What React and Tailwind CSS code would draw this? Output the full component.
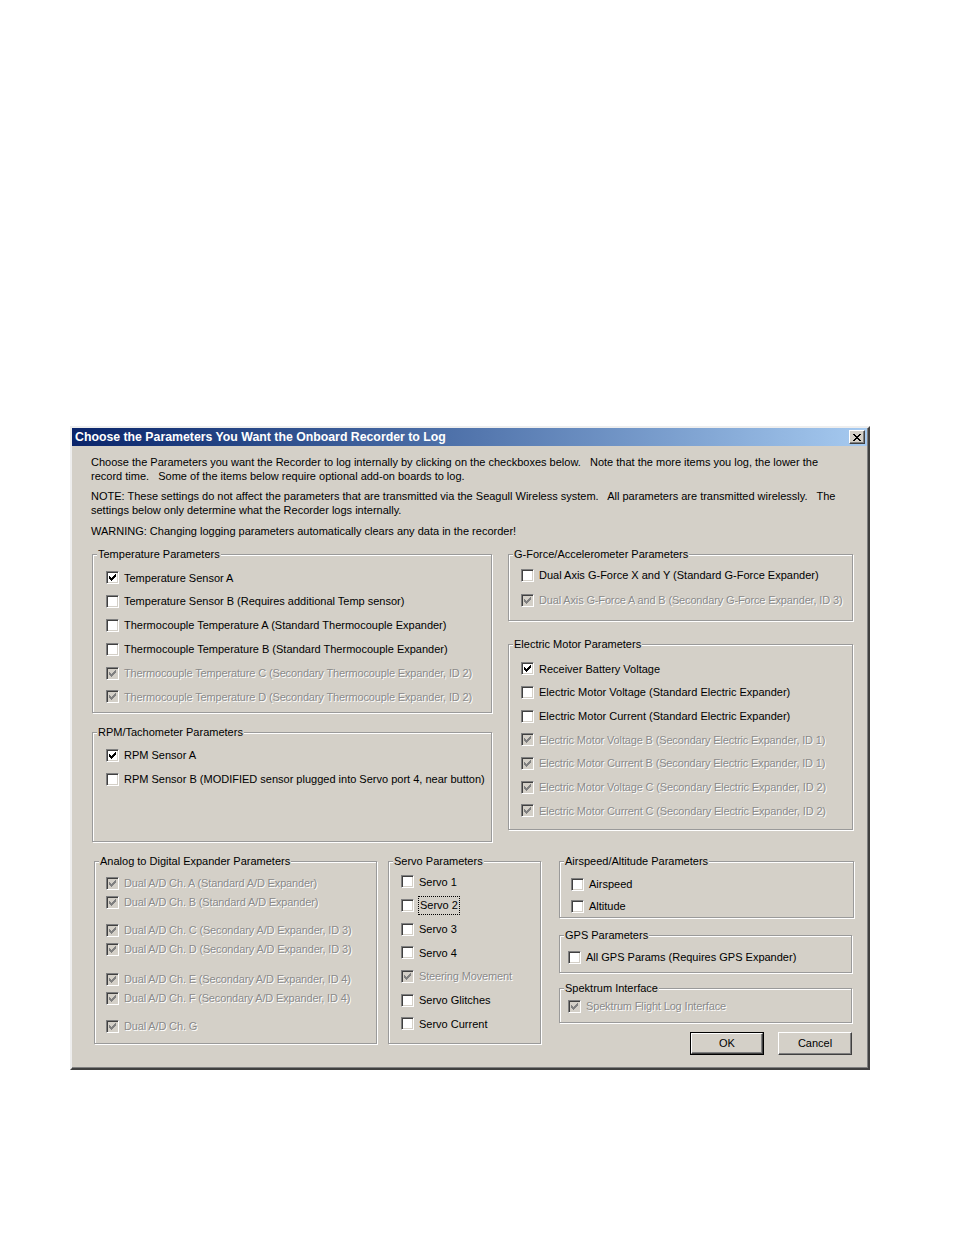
import React from "react";

function Check({ color }) {
  const rows = [
    [[6, 1]],
    [[5, 2]],
    [[0, 1], [4, 3]],
    [[0, 2], [3, 3]],
    [[0, 5]],
    [[1, 3]],
    [[2, 1]],
  ];
  return (
    <svg width="7" height="7" viewBox="0 0 7 7" shapeRendering="crispEdges" className="absolute left-[2px] top-[2px]">
      {rows.map((segs, y) =>
        segs.map(([x, w], i) => <rect key={y + "-" + i} x={x} y={y} width={w} height="1" fill={color} />)
      )}
    </svg>
  );
}

function Box({ checked, disabled }) {
  return (
    <span
      className={`relative inline-block w-[13px] h-[13px] shrink-0 border border-t-[#808080] border-l-[#808080] border-r-white border-b-white shadow-[inset_1px_1px_0_#404040,inset_-1px_-1px_0_#d4d0c8] ${
        disabled ? "bg-[#d4d0c8]" : "bg-white"
      }`}
    >
      {checked && <Check color={disabled ? "#808080" : "#000"} />}
    </span>
  );
}

function Item({ label, checked, disabled, h, className = "", focus }) {
  return (
    <div className={`flex items-center ${className}`} style={{ height: h }}>
      <Box checked={checked} disabled={disabled} />
      <span
        className={`ml-[5px] whitespace-nowrap ${
          disabled ? "text-[#8a8a8a] tracking-[-0.15px] [text-shadow:1px_1px_0_#fff]" : "text-black"
        } ${focus ? "outline outline-1 outline-dotted outline-black px-[1px] -ml-[-4px]" : ""}`}
      >
        {label}
      </span>
    </div>
  );
}

function Group({ title, className = "", bodyClass = "", children }) {
  return (
    <fieldset
      className={`border border-[#9a9a9a] shadow-[inset_1px_1px_0_#fff,1px_1px_0_#fff] ${className}`}
    >
      <legend className="ml-[4px] px-[1px] leading-[13px] bg-[#d4d0c8] text-black">{title}</legend>
      <div className={bodyClass}>{children}</div>
    </fieldset>
  );
}

function Btn({ label, def }) {
  return (
    <button
      className={`w-[74px] h-[23px] bg-[#d4d0c8] text-black ${
        def ? "border border-black" : ""
      }`}
    >
      <span className="flex items-center justify-center w-full h-full border border-t-white border-l-white border-r-[#404040] border-b-[#404040] shadow-[inset_-1px_-1px_0_#808080]">
        {label}
      </span>
    </button>
  );
}

export default function App() {
  return (
    <div
      className="min-h-[1235px] bg-white pt-[426px] pl-[70px] text-[11px] text-black"
      style={{ fontFamily: '"Liberation Sans", Arial, sans-serif' }}
    >
      <div className="w-[800px] h-[644px] bg-[#d4d0c8] border-2 border-t-[#eeeeee] border-l-[#eeeeee] border-r-[#404040] border-b-[#404040] shadow-[inset_-1px_-1px_0_#808080] flex flex-col">
        {/* Title bar */}
        <div className="h-[18px] mr-[1px] flex items-center justify-between bg-gradient-to-r from-[#0a246a] to-[#a6caf0] pl-[3px] pr-[2px]">
          <span className="text-white font-bold text-[12.3px] leading-none whitespace-nowrap">
            Choose the Parameters You Want the Onboard Recorder to Log
          </span>
          <span className="w-[16px] h-[14px] bg-[#d4d0c8] border border-t-white border-l-white border-r-[#404040] border-b-[#404040] shadow-[inset_-1px_-1px_0_#808080] flex items-center justify-center">
            <svg width="8" height="7" viewBox="0 0 8 7" shapeRendering="crispEdges">
              <path d="M0 0h2v1h1v1h2v-1h1v-1h2v1h-1v1h-1v1h-1v1h1v1h1v1h1v1h-2v-1h-1v-1h-2v1h-1v1h-2v-1h1v-1h1v-1h1v-1h-1v-1h-1v-1h-1z" fill="#000" />
            </svg>
          </span>
        </div>

        {/* Body */}
        <div className="pt-[9px] pl-[19px] leading-[14px]">
          <p className="whitespace-pre">
            {"Choose the Parameters you want the Recorder to log internally by clicking on the checkboxes below.   Note that the more items you log, the lower the\nrecord time.   Some of the items below require optional add-on boards to log."}
          </p>
          <p className="whitespace-pre mt-[6px]">
            {"NOTE: These settings do not affect the parameters that are transmitted via the Seagull Wireless system.   All parameters are transmitted wirelessly.   The\nsettings below only determine what the Recorder logs internally."}
          </p>
          <p className="whitespace-pre mt-[7px]">
            {"WARNING: Changing logging parameters automatically clears any data in the recorder!"}
          </p>
        </div>

        {/* Top groups */}
        <div className="flex pl-[20px] mt-[10px] gap-[16px]">
          <div className="flex flex-col w-[400px]">
            <Group title="Temperature Parameters" className="h-[165px]" bodyClass="pt-[5px] pl-[13px]">
              <Item h="23.8px" label="Temperature Sensor A" checked />
              <Item h="23.8px" label="Temperature Sensor B (Requires additional Temp sensor)" />
              <Item h="23.8px" label="Thermocouple Temperature A (Standard Thermocouple Expander)" />
              <Item h="23.8px" label="Thermocouple Temperature B (Standard Thermocouple Expander)" />
              <Item h="23.8px" label="Thermocouple Temperature C (Secondary Thermocouple Expander, ID 2)" checked disabled />
              <Item h="23.8px" label="Thermocouple Temperature D (Secondary Thermocouple Expander, ID 2)" checked disabled />
            </Group>
            <Group title="RPM/Tachometer Parameters" className="h-[116px] mt-[13px]" bodyClass="pt-[4px] pl-[13px]">
              <Item h="24px" label="RPM Sensor A" checked />
              <Item h="24px" label="RPM Sensor B (MODIFIED sensor plugged into Servo port 4, near button)" />
            </Group>
          </div>
          <div className="flex flex-col w-[345px]">
            <Group title="G-Force/Accelerometer Parameters" className="h-[73px]" bodyClass="pt-[2px] pl-[12px]">
              <Item h="25px" label="Dual Axis G-Force X and Y (Standard G-Force Expander)" />
              <Item h="25px" label="Dual Axis G-Force A and B (Secondary G-Force Expander, ID 3)" checked disabled />
            </Group>
            <Group title="Electric Motor Parameters" className="h-[192px] mt-[17px]" bodyClass="pt-[6px] pl-[12px]">
              <Item h="23.7px" label="Receiver Battery Voltage" checked />
              <Item h="23.7px" label="Electric Motor Voltage (Standard Electric Expander)" />
              <Item h="23.7px" label="Electric Motor Current (Standard Electric Expander)" />
              <Item h="23.7px" label="Electric Motor Voltage B (Secondary Electric Expander, ID 1)" checked disabled />
              <Item h="23.7px" label="Electric Motor Current B (Secondary Electric Expander, ID 1)" checked disabled />
              <Item h="23.7px" label="Electric Motor Voltage C (Secondary Electric Expander, ID 2)" checked disabled />
              <Item h="23.7px" label="Electric Motor Current C (Secondary Electric Expander, ID 2)" checked disabled />
            </Group>
          </div>
        </div>

        {/* Bottom groups */}
        <div className="flex pl-[22px] mt-[13px]">
          <Group title="Analog to Digital Expander Parameters" className="w-[283px] h-[189px]" bodyClass="pt-[6px] pl-[11px]">
            <Item h="19px" label="Dual A/D Ch. A (Standard A/D Expander)" checked disabled />
            <Item h="19px" label="Dual A/D Ch. B (Standard A/D Expander)" checked disabled />
            <Item h="19px" className="mt-[9px]" label="Dual A/D Ch. C (Secondary A/D Expander, ID 3)" checked disabled />
            <Item h="19px" label="Dual A/D Ch. D (Secondary A/D Expander, ID 3)" checked disabled />
            <Item h="19px" className="mt-[11px]" label="Dual A/D Ch. E (Secondary A/D Expander, ID 4)" checked disabled />
            <Item h="19px" label="Dual A/D Ch. F (Secondary A/D Expander, ID 4)" checked disabled />
            <Item h="19px" className="mt-[9px]" label="Dual A/D Ch. G" checked disabled />
          </Group>
          <Group title="Servo Parameters" className="w-[153px] h-[189px] ml-[11px]" bodyClass="pt-[2px] pl-[12px]">
            <Item h="23.7px" label="Servo 1" />
            <Item h="23.7px" label="Servo 2" focus />
            <Item h="23.7px" label="Servo 3" />
            <Item h="23.7px" label="Servo 4" />
            <Item h="23.7px" label="Steering Movement" checked disabled />
            <Item h="23.7px" label="Servo Glitches" />
            <Item h="23.7px" label="Servo Current" />
          </Group>
          <div className="flex flex-col w-[295px] ml-[18px]">
            <Group title="Airspeed/Altitude Parameters" className="h-[63px]" bodyClass="pt-[5px] pl-[11px]">
              <Item h="22px" label="Airspeed" />
              <Item h="22px" label="Altitude" />
            </Group>
            <Group title="GPS Parameters" className="h-[44px] w-[293px] mt-[11px]" bodyClass="pt-[4px] pl-[8px]">
              <Item h="22px" label="All GPS Params (Requires GPS Expander)" />
            </Group>
            <Group title="Spektrum Interface" className="h-[41px] w-[293px] mt-[9px]" bodyClass="pt-[1px] pl-[8px]">
              <Item h="20px" label="Spektrum Flight Log Interface" checked disabled />
            </Group>
            <div className="flex justify-end gap-[14px] mt-[9px] pr-[2px]">
              <Btn label="OK" def />
              <Btn label="Cancel" />
            </div>
          </div>
        </div>
      </div>
    </div>
  );
}
